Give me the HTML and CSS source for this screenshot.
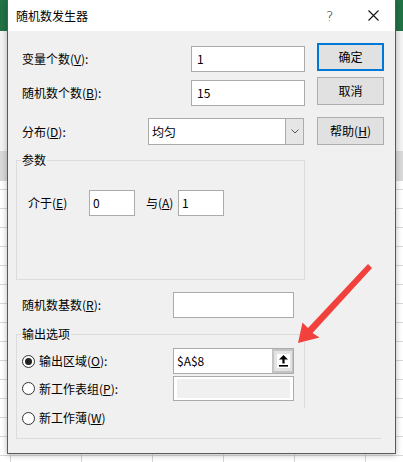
FILE: index.html
```html
<!DOCTYPE html>
<html lang="zh-CN">
<head>
<meta charset="utf-8">
<title>随机数发生器</title>
<link rel="stylesheet" href="styles.css">
</head>
<body>
<div class="dialog">
  <div class="titlebar">
    <span class="title">随机数发生器</span>
    <span class="help">?</span>
    <svg class="close" width="11" height="11" viewBox="0 0 11 11"><path d="M0.5 0.5 L10.5 10.5 M10.5 0.5 L0.5 10.5" stroke="#111" stroke-width="1.1" fill="none"/></svg>
  </div>
  <div class="content">
    <div class="top">
      <div class="form">
        <div class="frow r1"><span>变量个数(<u>V</u>):</span><div class="field f-num">1</div></div>
        <div class="frow r2"><span>随机数个数(<u>B</u>):</span><div class="field f-num">15</div></div>
        <div class="frow r3"><span>分布(<u>D</u>):</span>
          <div class="field select"><span class="sel-text">均匀</span><span class="sel-arrow"><svg width="8" height="5" viewBox="0 0 8 5"><path d="M0.5 0.5 L4 4 L7.5 0.5" stroke="#555" stroke-width="1" fill="none"/></svg></span></div>
        </div>
      </div>
      <div class="btns">
        <div class="btn b1 default">确定</div>
        <div class="btn b2">取消</div>
        <div class="btn b3">帮助(<u>H</u>)</div>
      </div>
    </div>

    <div class="group params">
      <span class="legend">参数</span>
      <div class="prow">
        <span class="plabel">介于(<u>E</u>)</span>
        <div class="field f-small">0</div>
        <span class="plabel2">与(<u>A</u>)</span>
        <div class="field f-small">1</div>
      </div>
    </div>

    <div class="frow seed"><span class="slabel">随机数基数(<u>R</u>):</span><div class="field f-wide"></div></div>

    <div class="group output">
      <span class="legend">输出选项</span>
      <div class="rrow o1">
        <span class="radio on"></span><span class="rlabel">输出区域(<u>O</u>):</span>
        <div class="field f-wide ref"><span class="ref-text">$A$8</span><span class="pick"><span class="pick-face"><svg width="9" height="12" viewBox="0 0 9 12"><path d="M4.5 0 L9 4.6 L5.6 4.6 L5.6 8.6 L3.4 8.6 L3.4 4.6 L0 4.6 Z" fill="#000"/><rect x="0" y="10" width="9" height="1.6" fill="#000"/></svg></span></span></div>
      </div>
      <div class="rrow o2">
        <span class="radio"></span><span class="rlabel">新工作表组(<u>P</u>):</span>
        <div class="field f-wide disabled"><span class="dis-inner"></span></div>
      </div>
      <div class="rrow o3">
        <span class="radio"></span><span class="rlabel">新工作薄(<u>W</u>)</span>
      </div>
    </div>
  </div>
</div>
<svg class="arrow" width="403" height="462" viewBox="0 0 403 462">
  <polygon points="298,343 302.5,322.5 308,328 368,264 372,268 312.5,333 319.5,337.5" fill="#f2403c"/>
</svg>
</body>
</html>
```

FILE: styles.css
```css
html, body {
  margin: 0;
  padding: 0;
}
body {
  position: relative;
  width: 403px;
  height: 462px;
  overflow: hidden;
  font-family: "Noto Sans CJK SC", "Noto Sans", sans-serif;
  font-size: 12px;
  color: #000;
  background:
    linear-gradient(#217346, #217346) 0 0 / 100% 31px no-repeat,
    linear-gradient(#f3f3f3, #f3f3f3) 0 31px / 100% 120px no-repeat,
    linear-gradient(#d9d9d9, #d9d9d9) 0 151px / 100% 30px no-repeat,
    repeating-linear-gradient(to right, transparent 0 10px, #d4d4d4 10px 11px, transparent 11px 71px),
    repeating-linear-gradient(to bottom, #ffffff 0 18px, #d8d8d8 18px 19px);
  background-color: #fff;
}
u {
  text-decoration: underline;
  text-underline-offset: 1px;
}

.dialog {
  margin-left: 7px;
  width: 389px;
  height: 454px;
  box-sizing: border-box;
  border: 1px solid #5a5a5a;
  border-top: none;
  background: #f0f0f0;
  box-shadow: 0 1px 6px rgba(0, 0, 0, 0.28);
}

.titlebar {
  height: 31px;
  background: #fff;
  display: flex;
  align-items: center;
  padding: 0 16px 0 8px;
  line-height: 16px;
}
.title {
  flex: 1;
}
.help {
  width: 10px;
  margin-right: 32px;
  font-family: "DejaVu Sans", sans-serif;
  font-size: 14px;
  font-weight: 300;
  color: #222;
}
.close {
  display: block;
}

.content {
  padding-left: 8px;
  line-height: 16px;
}

.top {
  display: flex;
  gap: 12px;
}
.form {
  width: 289px;
  display: flex;
  flex-direction: column;
}
.frow {
  display: flex;
  align-items: center;
  justify-content: space-between;
  padding-left: 6px;
}
.r1 { margin-top: 15px; height: 26px; }
.r2 { margin-top: 8px; height: 26px; }
.r3 { margin-top: 12px; height: 27px; }

.field {
  box-sizing: border-box;
  border: 1px solid #ababab;
  background: #fff;
  display: flex;
  align-items: center;
  padding-left: 5px;
  height: 26px;
}
.f-num { width: 114px; }
.select {
  width: 156px;
  height: 27px;
  margin-right: 1px;
  padding-left: 3px;
}
.sel-text { flex: 1; }
.sel-arrow {
  width: 17px;
  align-self: stretch;
  background: #e6e6e6;
  border-left: 1px solid #ababab;
  display: flex;
  align-items: center;
  justify-content: center;
}
.sel-arrow svg { display: block; }

.btns {
  width: 67px;
  display: flex;
  flex-direction: column;
}
.btn {
  box-sizing: border-box;
  height: 28px;
  background: #e1e1e1;
  border: 1px solid #adadad;
  display: flex;
  align-items: center;
  justify-content: center;
}
.btn.default { border: 2px solid #0078d7; }
.b1 { margin-top: 12px; }
.b2 { margin-top: 6px; }
.b3 { margin-top: 12px; }

.group {
  box-sizing: border-box;
  width: 289px;
  border: 1px solid #dcdcdc;
}
.legend {
  display: block;
  width: max-content;
  background: #f0f0f0;
  padding: 0 1px;
  margin: -9px 0 0 4px;
  line-height: 16px;
}
.params {
  margin-top: 15px;
  height: 120px;
}
.prow {
  display: flex;
  align-items: center;
  margin-top: 22px;
  padding-left: 11px;
  height: 26px;
}
.plabel { width: 61px; }
.plabel2 { width: 32px; margin-left: 11px; }
.f-small { width: 46px; padding-left: 3px; }

.seed { margin-top: 12px; height: 26px; justify-content: flex-start; }
.slabel { width: 151px; }
.f-wide { width: 121px; }

.output {
  position: relative;
  margin-top: 16px;
  height: 105px;
  border-right: none;
  border-bottom: none;
}
.output::before {
  content: "";
  position: absolute;
  left: 287px;
  top: 7px;
  width: 1px;
  height: 66px;
  background: #dcdcdc;
}
.output::after {
  content: "";
  position: absolute;
  left: -1px;
  bottom: 0;
  width: 365px;
  height: 1px;
  background: #dcdcdc;
}
.rrow {
  display: flex;
  align-items: center;
  padding-left: 5px;
}
.o1 { margin-top: 6px; height: 26px; }
.o2 { margin-top: 2px; height: 25px; }
.o3 { margin-top: 5px; height: 24px; }
.radio {
  box-sizing: border-box;
  width: 13px;
  height: 13px;
  border: 1px solid #333;
  border-radius: 50%;
  background: #fff;
  display: flex;
  align-items: center;
  justify-content: center;
}
.radio.on::after {
  content: "";
  width: 7px;
  height: 7px;
  border-radius: 50%;
  background: #222;
}
.rlabel {
  margin-left: 4px;
  width: 134px;
}
.ref { padding-left: 3px; }
.ref-text { flex: 1; }
.pick {
  box-sizing: border-box;
  width: 21px;
  align-self: stretch;
  background: #e3e3e3;
  border: 2px solid #c4c4c4;
  border-right-width: 1px;
  display: flex;
  align-items: center;
  justify-content: center;
}
.pick-face {
  width: 13px;
  height: 14px;
  background: #fff;
  display: flex;
  align-items: center;
  justify-content: center;
}
.pick-face svg { display: block; }
.disabled {
  height: 25px;
  padding: 2px 3px;
  align-items: stretch;
}
.dis-inner {
  flex: 1;
  background: #f0f0f0;
}

.arrow {
  position: absolute;
  left: 0;
  top: 0;
  pointer-events: none;
}
```
